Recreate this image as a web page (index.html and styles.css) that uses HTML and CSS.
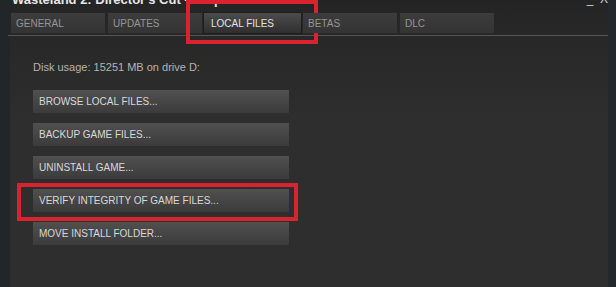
FILE: index.html
```html
<!DOCTYPE html>
<html>
<head>
<meta charset="utf-8">
<link rel="stylesheet" href="styles.css">
</head>
<body>
<div class="window">
  <div class="titlebar">
    <span class="title">Wasteland 2: Director's Cut - Properties</span>
    <span class="controls">_ &nbsp;X</span>
  </div>
  <div class="tabs">
    <div class="tab">GENERAL</div>
    <div class="tab">UPDATES</div>
    <div class="tab active">LOCAL FILES</div>
    <div class="tab">BETAS</div>
    <div class="tab">DLC</div>
  </div>
  <div class="rule"></div>
  <div class="content">
    <div class="disk">Disk usage: 15251 MB on drive D:</div>
    <div class="buttons">
      <div class="btn">BROWSE LOCAL FILES...</div>
      <div class="btn">BACKUP GAME FILES...</div>
      <div class="btn">UNINSTALL GAME...</div>
      <div class="btn marked">VERIFY INTEGRITY OF GAME FILES...</div>
      <div class="btn">MOVE INSTALL FOLDER...</div>
    </div>
  </div>
</div>
</body>
</html>
```

FILE: styles.css
```css
* { box-sizing: border-box; }
html, body { margin: 0; padding: 0; }
body {
  width: 616px;
  height: 287px;
  overflow: hidden;
  background: #2d2d2e;
  font-family: "Liberation Sans", Arial, sans-serif;
}
.window {
  width: 616px;
  height: 287px;
  display: flex;
  flex-direction: column;
  background: linear-gradient(to bottom, #242425 0px, #282829 40px, #2e2e2f 120px);
  border-left: 10px solid #222629;
  border-right: 8px solid #23282c;
}
.titlebar {
  height: 8px;
  display: flex;
  justify-content: space-between;
  align-items: flex-end;
  padding: 0 0 0 2px;
  overflow: hidden;
}
.title {
  color: #e6e6e6;
  font-weight: bold;
  font-size: 13px;
  line-height: 13px;
  margin-bottom: 2px;
}
.controls {
  color: #cfcfcf;
  font-size: 12px;
  line-height: 12px;
  margin-bottom: 3px;
}
.tabs {
  display: flex;
  gap: 3px;
  margin-top: 5px;
  padding-left: 1px;
}
.tab {
  position: relative;
  width: 94px;
  height: 20px;
  padding: 6px 0 0 5px;
  font-size: 10px;
  line-height: 10px;
  color: #959595;
  background: linear-gradient(to bottom, #3c3c3d, #343435);
}
.tab.active {
  width: 97px;
  margin: 0 -1px;
  padding-left: 7px;
  color: #e2e2e2;
  background: linear-gradient(to bottom, #4c4c4d, #2f2f30);
  box-shadow: 0 0 0 1px #1d1d1d;
}
.tab.active::after {
  content: "";
  position: absolute;
  left: -18px;
  right: -17px;
  top: -13px;
  bottom: -11px;
  border: 4px solid #d9232e;
}
.rule {
  height: 1px;
  background: #555556;
  margin: 2px 0 0 -2px;
  width: 600px;
}
.content {
  padding: 25px 0 0 23px;
}
.disk {
  color: #b4b4b4;
  font-size: 11px;
  line-height: 13px;
}
.buttons {
  margin-top: 16px;
  display: flex;
  flex-direction: column;
  gap: 10px;
}
.btn {
  position: relative;
  width: 256px;
  height: 23px;
  padding: 7px 0 0 6px;
  font-size: 10px;
  line-height: 10px;
  color: #d8d8d8;
  background: linear-gradient(to bottom, #505051, #3b3b3c);
}
.btn.marked::after {
  content: "";
  position: absolute;
  left: -16px;
  right: -9px;
  top: -6px;
  bottom: -9px;
  border: 4px solid #d9232e;
}
```
